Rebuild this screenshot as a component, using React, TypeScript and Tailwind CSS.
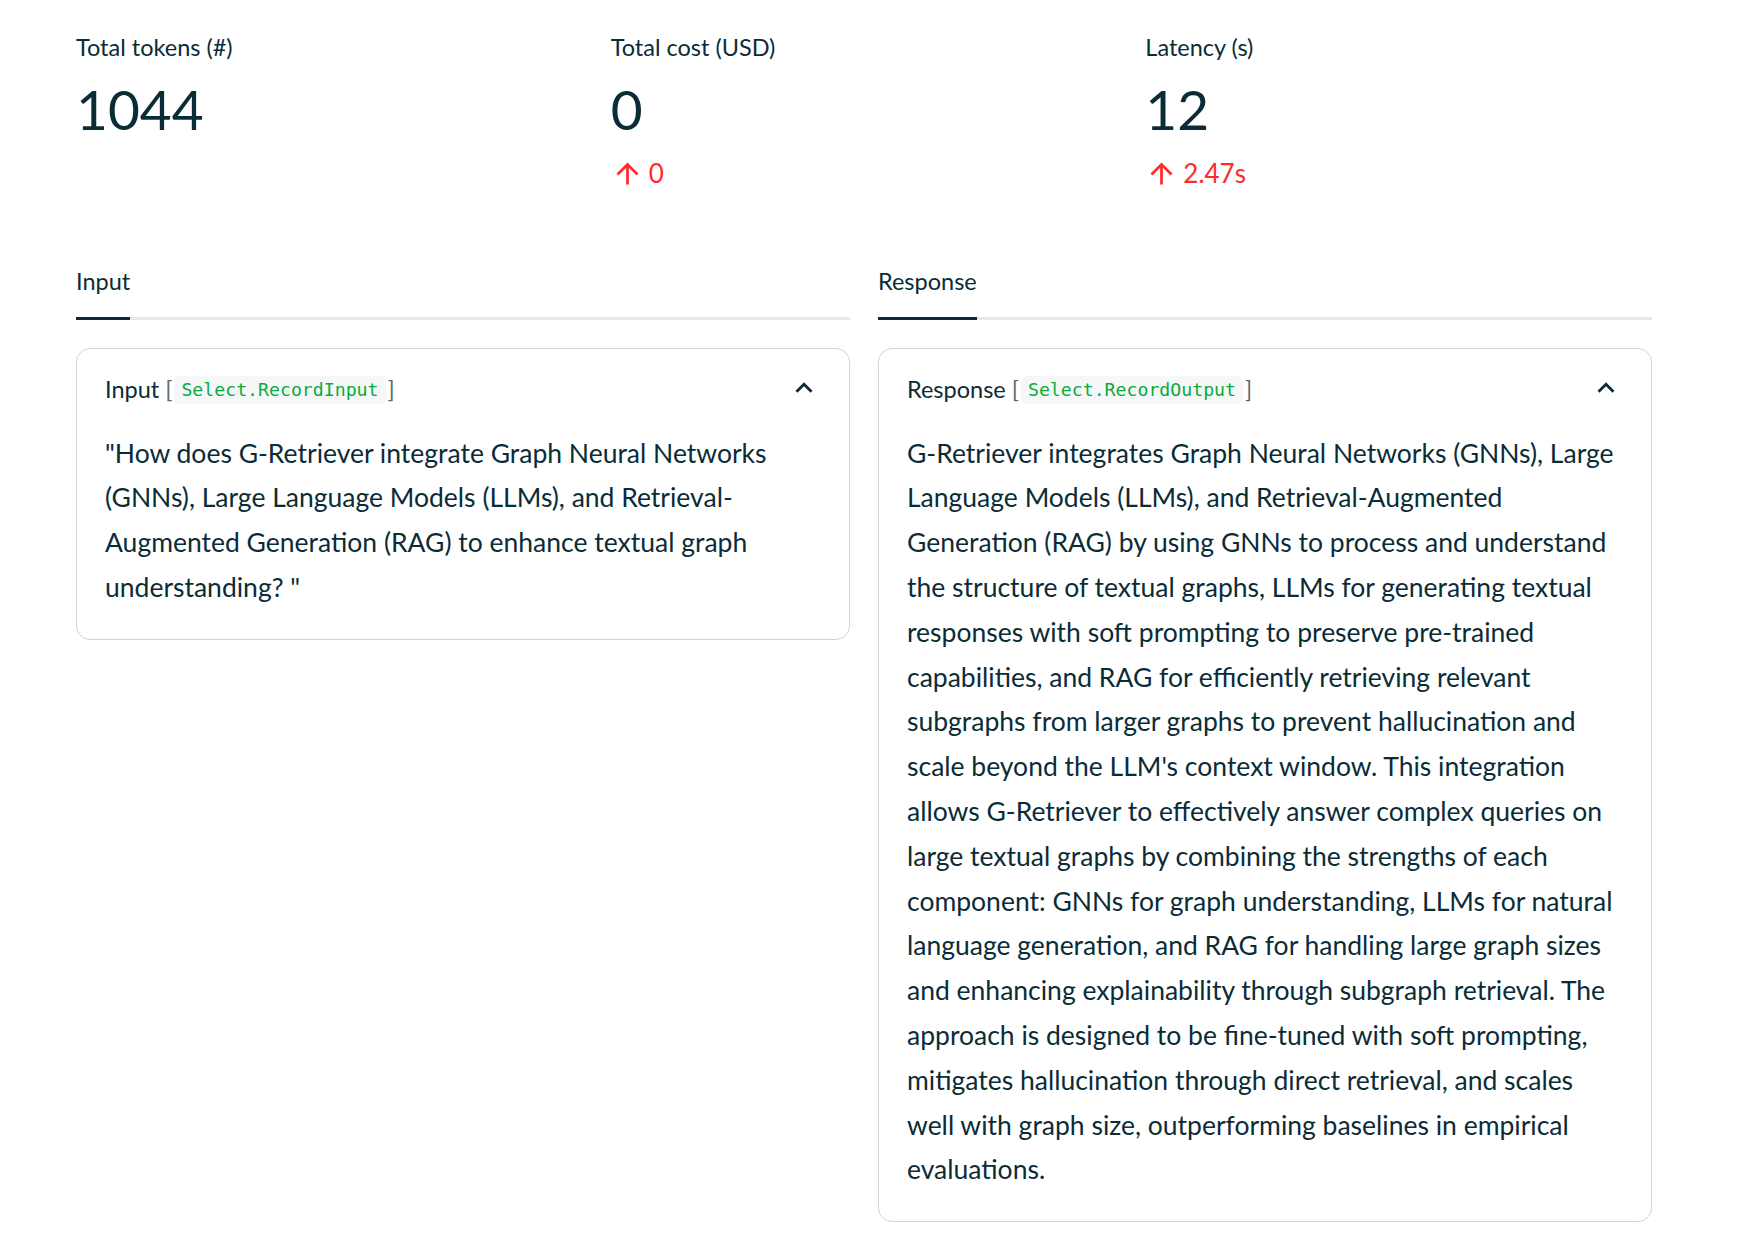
import React from 'react';

const ink = 'text-[#0A2C37]';

function ArrowUp() {
  return (
    <svg width="33" height="33" viewBox="0 0 24 24" fill="#ff2b2b" className="shrink-0">
      <path d="M4 12l1.41 1.41L11 7.83V20h2V7.83l5.58 5.59L20 12l-8-8-8 8z" />
    </svg>
  );
}

function ChevronUp() {
  return (
    <svg width="34" height="34" viewBox="0 0 24 24" fill="#0A2C37" className="-mt-[4px] shrink-0">
      <path d="M12 8l-6 6 1.41 1.41L12 10.83l4.59 4.58L18 14z" />
    </svg>
  );
}

function Metric({ label, value, delta }: { label: string; value: string; delta?: string }) {
  return (
    <div className="flex flex-col">
      <div className="text-[23.5px] leading-[1.6]">{label}</div>
      <div className="mt-[9px] text-[55px] leading-[1.2]">{value}</div>
      {delta && (
        <div className="mt-[11px] flex items-center gap-[5px] text-[26px] leading-[1.6] text-[#ff2b2b]">
          <ArrowUp />
          <span>{delta}</span>
        </div>
      )}
    </div>
  );
}

function Tab({ label }: { label: string }) {
  return (
    <div className="border-b-[3px] border-[#e6e9ec]">
      <div className="-mb-[3px] inline-block border-b-[3px] border-[#0A2C37] pb-[16px] text-[23.5px] leading-[39.2px]">
        {label}
      </div>
    </div>
  );
}

function Card({ title, selector, children }: { title: string; selector: string; children: React.ReactNode }) {
  return (
    <div className="rounded-[14px] border border-[#ced5d7] px-[28px] pt-[21px] pb-[29px]">
      <div className="flex items-center justify-between">
        <div className="flex items-center text-[23.5px] leading-[39.2px]">
          <span>{title}</span>
          <span className="ml-[6px] text-[#5d6e76]">[</span>
          <code className="mx-[2px] rounded-[6px] bg-[#f6f7f9] px-[7px] py-[3px] font-['DejaVu_Sans_Mono',monospace] text-[18.2px] leading-[22px] text-[#09ab3b]">
            {selector}
          </code>
          <span className="text-[#5d6e76]">]</span>
        </div>
        <ChevronUp />
      </div>
      <p className="mt-[21px] text-[26.5px] leading-[44.8px]">{children}</p>
    </div>
  );
}

export default function App() {
  return (
    <div className={`min-h-screen w-full bg-white pl-[76px] pr-[108px] pt-[29px] font-['Lato',sans-serif] ${ink}`}>
      {/* Metrics */}
      <div className="grid grid-cols-3 gap-[28px]">
        <Metric label="Total tokens (#)" value="1044" />
        <Metric label="Total cost (USD)" value="0" delta="0" />
        <Metric label="Latency (s)" value="12" delta="2.47s" />
      </div>

      {/* Tabs */}
      <div className="mt-[68px] grid grid-cols-2 gap-[28px]">
        <Tab label="Input" />
        <Tab label="Response" />
      </div>

      {/* Cards */}
      <div className="mt-[28px] grid grid-cols-2 items-start gap-[28px]">
        <Card title="Input" selector="Select.RecordInput">
          "How does G-Retriever integrate Graph Neural Networks (GNNs), Large Language Models (LLMs), and
          Retrieval-Augmented Generation (RAG) to enhance textual graph understanding? "
        </Card>
        <Card title="Response" selector="Select.RecordOutput">
          G-Retriever integrates Graph Neural Networks (GNNs), Large Language Models (LLMs), and Retrieval-Augmented
          Generation (RAG) by using GNNs to process and understand the structure of textual graphs, LLMs for
          generating textual responses with soft prompting to preserve pre-trained capabilities, and RAG for
          efficiently retrieving relevant subgraphs from larger graphs to prevent hallucination and scale beyond the
          LLM's context window. This integration allows G-Retriever to effectively answer complex queries on large
          textual graphs by combining the strengths of each component: GNNs for graph understanding, LLMs for
          natural language generation, and RAG for handling large graph sizes and enhancing explainability through
          subgraph retrieval. The approach is designed to be fine-tuned with soft prompting, mitigates hallucination
          through direct retrieval, and scales well with graph size, outperforming baselines in empirical
          evaluations.
        </Card>
      </div>
    </div>
  );
}
